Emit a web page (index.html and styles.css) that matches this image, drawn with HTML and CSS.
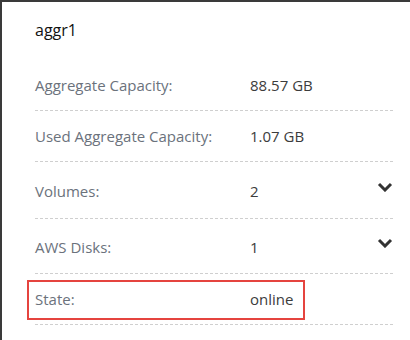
FILE: index.html
```html
<!DOCTYPE html>
<html lang="en">
<head>
    <meta charset="UTF-8">
    <meta name="viewport" content="width=device-width, initial-scale=1.0">
    <title>aggr1</title>
    <link rel="stylesheet" href="styles.css">
</head>
<body>
    <div class="card">
        <h2 class="card-title">aggr1</h2>

        <div class="row">
            <span class="label">Aggregate Capacity:</span>
            <span class="value">88.57 GB</span>
        </div>
        <div class="row">
            <span class="label">Used Aggregate Capacity:</span>
            <span class="value">1.07 GB</span>
        </div>
        <div class="row expandable">
            <span class="label">Volumes:</span>
            <span class="value">2</span>
            <svg class="chevron" width="16" height="10" viewBox="0 0 16 10">
                <polyline points="2,2 8,8 14,2" fill="none" stroke="#333" stroke-width="3"/>
            </svg>
        </div>
        <div class="row expandable last-expandable">
            <span class="label">AWS Disks:</span>
            <span class="value">1</span>
            <svg class="chevron" width="16" height="10" viewBox="0 0 16 10">
                <polyline points="2,2 8,8 14,2" fill="none" stroke="#333" stroke-width="3"/>
            </svg>
        </div>
        <div class="row">
            <span class="label">State:</span>
            <span class="value">online</span>
            <div class="highlight-box"></div>
        </div>
    </div>
</body>
</html>
```

FILE: styles.css
```css
body {
    margin: 0;
    padding: 0;
    background: white;
    font-family: "Open Sans", "Noto Sans", sans-serif;
}
.card {
    border-top: 2px solid #3a3a3a;
    border-left: 2px solid #3a3a3a;
    padding: 0 17px 0 33px;
    height: 338px;
}
.card-title {
    margin: 0;
    padding: 17px 0 19px;
    font-size: 16px;
    line-height: 22px;
    font-weight: 500;
    color: #111;
}
.row {
    position: relative;
    display: flex;
    align-items: flex-start;
    padding: 15px 0;
    border-bottom: 1px dashed #cfcfcf;
    font-size: 15px;
    line-height: 20px;
}
.row.expandable {
    padding: 19px 0 17px;
}
.row.last-expandable {
    padding: 18px 0 16px;
}
.label {
    width: 215px;
    color: #6b727c;
}
.value {
    flex: 1;
    color: #3c3c3c;
}
.chevron {
    margin-top: 1px;
}
.highlight-box {
    position: absolute;
    left: -8px;
    top: 6px;
    width: 278px;
    height: 40px;
    box-sizing: border-box;
    border: 2px solid #e5443f;
}
```
